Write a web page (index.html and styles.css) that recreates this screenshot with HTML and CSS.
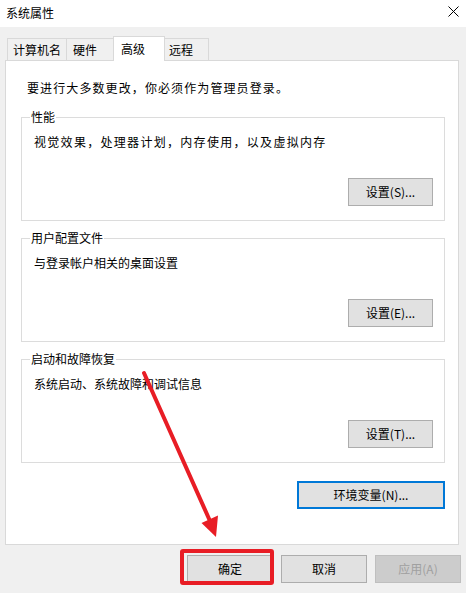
FILE: index.html
```html
<!DOCTYPE html>
<html lang="zh-CN">
<head>
<meta charset="utf-8">
<title>系统属性</title>
<link rel="stylesheet" href="styles.css">
</head>
<body>
<div class="window">
  <div class="titlebar">
    <span class="title">系统属性</span>
    <svg class="close" width="11" height="11" viewBox="0 0 11 11"><path d="M0.5 0.5L10.5 10.5M10.5 0.5L0.5 10.5" stroke="#000" stroke-width="1"/></svg>
  </div>
  <div class="tabs">
    <div class="tab tab-computer">计算机名</div>
    <div class="tab tab-hardware">硬件</div>
    <div class="tab tab-advanced">高级</div>
    <div class="tab tab-remote">远程</div>
  </div>
  <div class="panel">
    <p class="notice">要进行大多数更改，你必须作为管理员登录。</p>
    <fieldset class="group">
      <legend>性能</legend>
      <p class="desc desc-wide">视觉效果，处理器计划，内存使用，以及虚拟内存</p>
      <div class="actions"><button class="btn">设置(S)...</button></div>
    </fieldset>
    <fieldset class="group">
      <legend>用户配置文件</legend>
      <p class="desc">与登录帐户相关的桌面设置</p>
      <div class="actions"><button class="btn">设置(E)...</button></div>
    </fieldset>
    <fieldset class="group">
      <legend>启动和故障恢复</legend>
      <p class="desc">系统启动、系统故障和调试信息</p>
      <div class="actions"><button class="btn">设置(T)...</button></div>
    </fieldset>
    <div class="env-row"><button class="btn btn-env">环境变量(N)...</button></div>
  </div>
  <div class="footer">
    <button class="btn btn-footer">确定</button>
    <button class="btn btn-footer">取消</button>
    <button class="btn btn-footer" disabled>应用(A)</button>
  </div>
  <svg class="annotation" width="466" height="593" viewBox="0 0 466 593">
    <line x1="144" y1="373" x2="210" y2="521" stroke="#e81d25" stroke-width="4" stroke-linecap="round"/>
    <polygon points="216,537 218,515.5 201.5,523" fill="#e81d25"/>
  </svg>
  <div class="highlight"></div>
</div>
</body>
</html>
```

FILE: styles.css
```css
* { box-sizing: border-box; }
html, body { margin: 0; padding: 0; }
body {
  width: 466px;
  height: 593px;
  overflow: hidden;
  background: #f0f0f0;
  font-family: "Noto Sans CJK SC", "Microsoft YaHei", sans-serif;
  font-size: 12px;
  color: #000;
}
.window { position: relative; width: 466px; height: 593px; }

.titlebar {
  height: 27px;
  background: #fff;
  display: flex;
  align-items: center;
  justify-content: space-between;
  padding: 0 7px 0 6px;
}
.title { line-height: 16px; margin-bottom: 2px; }
.close { display: block; margin-bottom: 4px; }

.tabs {
  display: flex;
  align-items: flex-start;
  height: 25px;
  margin-top: 9px;
  padding-left: 7px;
  position: relative;
  z-index: 1;
}
.tab {
  height: 22px;
  margin-top: 2px;
  border: 1px solid #d9d9d9;
  border-bottom: 0;
  background: #f0f0f0;
  display: flex;
  align-items: center;
  line-height: 16px;
  padding-left: 5px;
}
.tab-computer { width: 60px; }
.tab-hardware { width: 49px; margin-left: -1px; padding-left: 6px; }
.tab-advanced {
  width: 52px;
  height: 25px;
  margin-top: 0;
  margin-left: -2px;
  padding-left: 7px;
  padding-bottom: 1px;
  background: #fff;
  position: relative;
  z-index: 2;
}
.tab-remote { width: 47px; margin-left: -3px; padding-left: 6px; }

.panel {
  margin: -1px 7px 0 5px;
  height: 485px;
  background: #fff;
  border: 1px solid #d9d9d9;
  padding: 19px 13px 0 15px;
}
.notice { margin: 0; padding-left: 6px; line-height: 16px; letter-spacing: 1.1px; }

.group {
  margin: 9px 0 0;
  border: 1px solid #dcdcdc;
  padding: 0 11px 14px 8px;
  min-inline-size: 0;
}
.notice + .group { margin-top: 13px; }
.group legend { padding: 0 1px; line-height: 16px; }
.desc { margin: 9px 0 0; padding-left: 4px; line-height: 16px; }
.desc-wide { letter-spacing: 1.3px; }
.actions { display: flex; justify-content: flex-end; margin-top: 28px; }

.btn {
  font: inherit;
  color: #000;
  width: 85px;
  height: 28px;
  padding: 0;
  background: #e1e1e1;
  border: 1px solid #adadad;
  display: flex;
  align-items: center;
  justify-content: center;
  line-height: 16px;
}
.env-row { display: flex; justify-content: flex-end; margin-top: 18px; }
.btn-env { width: 148px; border: 2px solid #0078d7; }

.footer {
  display: flex;
  justify-content: flex-end;
  gap: 8px;
  margin-top: 10px;
  padding-right: 5px;
}
.btn-footer { width: 86px; }
.btn:disabled { background: #cccccc; border-color: #bfbfbf; color: #a0a0a0; }

.annotation { position: absolute; left: 0; top: 0; pointer-events: none; }
.highlight {
  position: absolute;
  left: 180px;
  top: 549px;
  width: 94px;
  height: 36px;
  border: 4px solid #e81d25;
  border-radius: 3px;
  pointer-events: none;
}
```
